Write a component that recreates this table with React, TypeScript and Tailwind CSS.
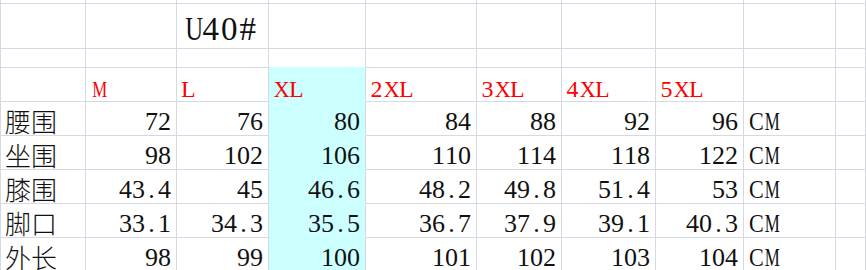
import React from "react";

const LINE = "border-[#d5d9e3]";

type Glyph = { w: string; s?: string };
type GlyphMap = Record<string, Glyph>;

const dataMap: GlyphMap = {
  C: { w: "w-[14px]", s: "scale-x-[0.85]" },
  M: { w: "w-[15px]", s: "scale-x-[0.65]" },
};
const headMap: GlyphMap = {
  M: { w: "w-[15px]", s: "scale-x-[0.7]" },
  X: { w: "w-[16px]", s: "scale-x-[0.92]" },
  L: { w: "w-[14px]" },
};
const titleMap: GlyphMap = {
  U: { w: "w-[18.5px]", s: "scale-x-[0.75]" },
};

function Mono({ text, w, map }: { text: string; w: string; map: GlyphMap }) {
  return (
    <span className="inline-flex">
      {text.split("").map((ch, i) => {
        const g = map[ch];
        return (
          <span key={i} className={`inline-block text-center ${g ? g.w : w} ${g?.s ?? ""}`}>
            {ch}
          </span>
        );
      })}
    </span>
  );
}

function Cell({
  children,
  className = "",
}: {
  children?: React.ReactNode;
  className?: string;
}) {
  return (
    <div className={`flex whitespace-nowrap overflow-visible border-r border-b ${LINE} ${className}`}>
      {children}
    </div>
  );
}

const headers = ["M", "L", "XL", "2XL", "3XL", "4XL", "5XL"];
const rows: [string, string[]][] = [
  ["腰围", ["72", "76", "80", "84", "88", "92", "96"]],
  ["坐围", ["98", "102", "106", "110", "114", "118", "122"]],
  ["膝围", ["43.4", "45", "46.6", "48.2", "49.8", "51.4", "53"]],
  ["脚口", ["33.1", "34.3", "35.5", "36.7", "37.9", "39.1", "40.3"]],
  ["外长", ["98", "99", "100", "101", "102", "103", "104"]],
];

const cyan = "bg-[#ccffff] border-b-[#ccffff]";

export default function App() {
  return (
    <div
      className={`w-[866px] h-[270px] overflow-hidden bg-white border-l ${LINE} grid grid-cols-[85px_91px_92px_97px_111px_85px_94px_88px_92px_1fr] grid-rows-[4px_45px_19px_34px_34px_34px_34px_34px_34px] text-[#111111] font-['Liberation_Serif',serif]`}
    >
      {/* row 0 */}
      {Array.from({ length: 10 }).map((_, i) => (
        <Cell key={`r0-${i}`} />
      ))}
      {/* row 1: title */}
      <Cell />
      <Cell />
      <Cell className="items-end pl-[6px] pb-[2px] text-[33px] leading-none">
        <Mono text="U40#" w="w-[18.5px]" map={titleMap} />
      </Cell>
      {Array.from({ length: 7 }).map((_, i) => (
        <Cell key={`r1-${i}`} />
      ))}
      {/* row 2 */}
      {Array.from({ length: 10 }).map((_, i) => (
        <Cell key={`r2-${i}`} className={i === 3 ? "border-b-[#ccffff]" : ""} />
      ))}
      {/* row 3: size headers */}
      <Cell />
      {headers.map((h, i) => (
        <Cell
          key={h}
          className={`items-end pl-[4px] text-[24px] leading-none text-[#ff0000] ${i === 2 ? cyan : ""}`}
        >
          <Mono text={h} w="w-[13px]" map={headMap} />
        </Cell>
      ))}
      <Cell />
      <Cell />
      {/* data rows */}
      {rows.map(([label, vals]) => (
        <React.Fragment key={label}>
          <Cell className="items-end pl-[4px] pb-[1px] text-[26px] leading-none font-light font-['Noto_Sans_CJK_SC',sans-serif]">
            <span>{label}</span>
          </Cell>
          {vals.map((v, i) => (
            <Cell
              key={i}
              className={`items-end justify-end pr-[5px] text-[26px] leading-none ${i === 2 ? cyan : ""}`}
            >
              <Mono text={v} w="w-[13px]" map={dataMap} />
            </Cell>
          ))}
          <Cell className="items-end pl-[4px] text-[26px] leading-none">
            <Mono text="CM" w="w-[14px]" map={dataMap} />
          </Cell>
          <Cell />
        </React.Fragment>
      ))}
    </div>
  );
}
